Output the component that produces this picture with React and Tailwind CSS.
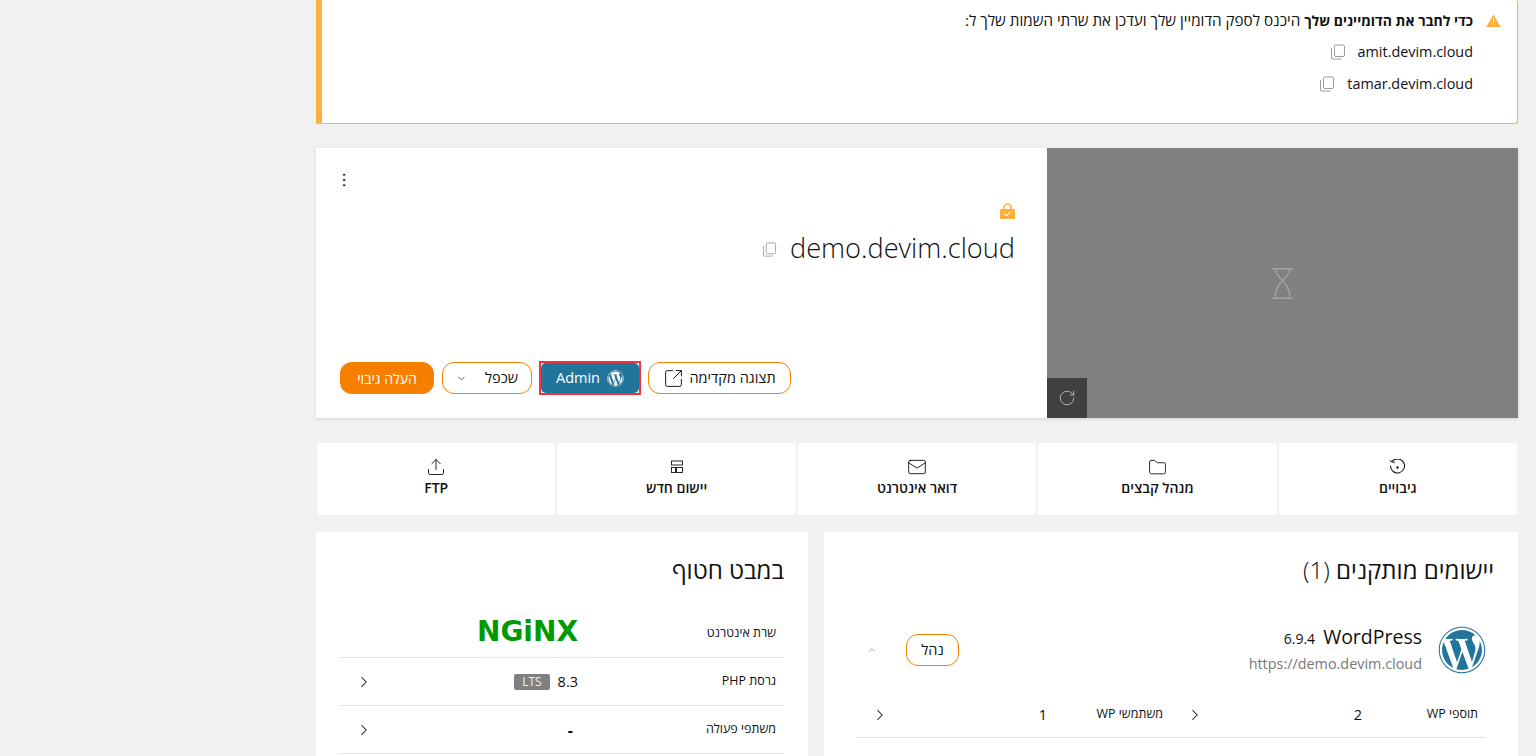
import React from "react";
import { ChevronDown, ChevronRight, ChevronUp, EllipsisVertical, Folder, Mail, RotateCw, SquareArrowOutUpRight, Upload } from "lucide-react";
import { FaWordpress } from "react-icons/fa";

const CopyIcon = ({ className }) => (
  <svg className={className} viewBox="0 0 16 16" fill="none" stroke="currentColor" strokeWidth="1">
    <rect x="4.5" y="1" width="10" height="11.5" rx="1.5" />
    <path d="M1.5 4v10a1 1 0 0 0 1 1h9" />
  </svg>
);

const BackupIcon = () => (
  <svg className="w-[17px] h-[17px]" viewBox="0 0 16 16" fill="none" stroke="currentColor" strokeWidth="1">
    <path d="M3 2.2a6.6 6.6 0 1 1-1.6 4.2" />
    <path d="M1 1.5l2 1.2v.1l2.600 .2" />
    <circle cx="8" cy="8" r=".6" fill="currentColor" />
  </svg>
);

const AppsIcon = () => (
  <svg className="w-[14px] h-[14px]" viewBox="0 0 14 14" fill="none" stroke="currentColor" strokeWidth="0.9">
    <rect x="1.500" y="1" width="11" height="4" />
    <rect x="1.500" y="7.500" width="4" height="5" />
    <rect x="6.500" y="7.500" width="6" height="5" />
  </svg>
);

const tiles = [
  { label: "גיבויים", icon: <BackupIcon /> },
  { label: "מנהל קבצים", icon: <Folder className="w-[19px] h-[19px]" strokeWidth={1.1} /> },
  { label: "דואר אינטרנט", icon: <Mail className="w-[20px] h-[20px]" strokeWidth={1.1} /> },
  { label: "יישום חדש", icon: <AppsIcon /> },
  { label: "FTP", icon: <Upload className="w-[20px] h-[20px]" strokeWidth={1.1} /> },
];

const Alert = () => (
  <div className="h-[124px] bg-white border border-t-0 border-[#f5b54c] border-l-[6px] border-l-[#fdb03c] rounded-r-[3px] pr-[44px] pt-[9px] text-[14.400px] text-[#111]">
    <div className="flex items-center h-[22px] relative">
      <svg className="absolute right-[-28px] top-[5px] w-[15px] h-[13px]" viewBox="0 0 15 13">
        <path d="M7.500 .5L14.800 13H.2z" fill="#fdb03c" />
        <rect x="7" y="4.500" width="1" height="4" fill="#fff" />
        <rect x="7" y="9.500" width="1" height="1" fill="#fff" />
      </svg>
      <span className="text-[15.200px]"><b className="text-[14px]">כדי לחבר את הדומיינים שלך</b> היכנס לספק הדומיין שלך ועדכן את שרתי השמות שלך ל:</span>
    </div>
    <div className="mt-[5px]">
      {["amit.devim.cloud", "tamar.devim.cloud"].map((d) => (
        <div key={d} className="flex items-center h-[32px] gap-[12px]">
          <span>{d}</span>
          <CopyIcon className="w-[16px] h-[16px] text-[#9a9a9a]" />
        </div>
      ))}
    </div>
  </div>
);

const Hero = () => (
  <div className="h-[270px] bg-white flex shadow-[0_1px_3px_rgba(0,0,0,0.12)]">
    <div className="w-[471px] bg-[#808080] relative flex items-center justify-center">
      <svg className="w-[21px] h-[31px] text-[#a3a3a3]" viewBox="0 0 21 31" fill="none" stroke="currentColor" strokeWidth="1.400">
        <path d="M0 .7h21M0 30.300h21M3 1c0 8 15 13 15 29M18 1C18 9 3 14 3 30" />
      </svg>
      <div className="absolute left-0 bottom-0 w-[40px] h-[40px] bg-[#404040] flex items-center justify-center">
        <RotateCw className="w-[18px] h-[18px] text-[#bdbdbd]" strokeWidth={1.2} />
      </div>
    </div>
    <div className="flex-1 px-[24px] pt-[22px] pb-[24px] flex flex-col">
      <div className="flex justify-end">
        <EllipsisVertical className="w-[18px] h-[18px] text-[#111] -ml-[5px] mt-[1px] mb-[1px]" strokeWidth={1.2} />
      </div>
      <div className="pr-[8px] mt-[13px]">
        <svg className="block w-[15px] h-[16px]" viewBox="0 0 15 16">
          <path d="M4 7V4.500a3.500 3.500 0 0 1 7 0V7" fill="none" stroke="#fdb03c" strokeWidth="1.600" />
          <rect y="6" width="15" height="10" rx="1" fill="#fdb03c" />
          <path d="M4.500 10.800l2 2 3.800-3.600" fill="none" stroke="#fff" strokeWidth="1.100" />
        </svg>
        <div className="flex items-center gap-[13px] mt-[9px]">
          <span className="text-[27.200px] leading-[40px] font-light text-[#111]" dir="ltr">demo.devim.cloud</span>
          <CopyIcon className="w-[15px] h-[15px] text-[#a0a0a0] mt-[2px]" />
        </div>
      </div>
      <div className="mt-auto flex items-center justify-end gap-[7px] h-[32px] text-[14.500px] text-[#111]">
        <button className="h-[32px] w-[143px] border border-[#f77f00] rounded-[12px] flex items-center justify-center gap-[5px]">
          תצוגה מקדימה
          <SquareArrowOutUpRight className="w-[21px] h-[21px]" strokeWidth={1.1} />
        </button>
        <div className="border-2 border-[#f5303c]">
          <button className="h-[30px] w-[98px] bg-[#21759b] text-white rounded-[5px] flex items-center justify-center gap-[7px]">
            <FaWordpress className="w-[17px] h-[17px]" />
            <span>Admin</span>
          </button>
        </div>
        <button className="h-[32px] w-[90px] border border-[#f77f00] rounded-[12px] flex items-center justify-center gap-[18px]">
          שכפל
          <ChevronDown className="w-[11px] h-[11px]" strokeWidth={1.5} />
        </button>
        <button className="h-[32px] w-[94px] bg-[#f77f00] text-white rounded-[12px] text-[14px] font-medium mr-[1px]">העלה גיבוי</button>
      </div>
    </div>
  </div>
);

const Tiles = () => (
  <div className="grid grid-cols-5 gap-[2px] px-[1px] mt-[25px]">
    {tiles.map((t) => (
      <div key={t.label} className="h-[72px] bg-white rounded-[2px] flex flex-col items-center pt-[15px] text-[#111]">
        <div className="h-[18px] flex items-center justify-center">{t.icon}</div>
        <div className="text-[14px] font-semibold leading-[18px] mt-[3px]">{t.label}</div>
      </div>
    ))}
  </div>
);

const AppsCard = () => (
  <div className="w-[694px] bg-white rounded-[2px] h-[260px] pt-[24px]">
    <h2 className="text-[24px] leading-[28px] text-[#111] pr-[24px]">
      יישומים מותקנים <span className="font-light">(1)</span>
    </h2>
    <div className="px-[32px] mt-[42px]">
      <div className="flex items-center h-[48px]">
        <FaWordpress className="w-[48px] h-[48px] text-[#21759b]" />
        <div className="mr-[16px] self-start">
          <div className="flex items-baseline gap-[8px] text-[#111]">
            <span className="text-[19.500px] leading-[22px]">WordPress</span>
            <span className="text-[14px]">6.9.4</span>
          </div>
          <div className="text-[14.400px] text-[#777] leading-[26px] mt-[2px]" dir="ltr">https://demo.devim.cloud</div>
        </div>
        <button className="mr-auto h-[32px] w-[53px] border border-[#f77f00] rounded-[12px] text-[14.500px] text-[#111]">נהל</button>
        <ChevronUp className="w-[10px] h-[10px] text-[#777] mr-[29px] ml-[11px]" strokeWidth={1.5} />
      </div>
      <div className="mt-[16px] h-[48px] pt-[2px] border-b border-[#e5e5e5] flex items-center text-[#111]">
        <div className="w-1/2 flex items-center pr-[8px] pl-[15px]">
          <span className="text-[12.500px] w-[116px] font-medium">תוספי WP</span>
          <span className="text-[14.500px]">2</span>
          <ChevronRight className="w-[18px] h-[18px] mr-auto" strokeWidth={1.4} />
        </div>
        <div className="w-1/2 flex items-center pr-[8px] pl-[15px]">
          <span className="text-[12.500px] w-[116px] font-medium">משתמשי WP</span>
          <span className="text-[14.500px]">1</span>
          <ChevronRight className="w-[18px] h-[18px] mr-auto" strokeWidth={1.4} />
        </div>
      </div>
    </div>
  </div>
);

const Row = ({ label, children, chevron }) => (
  <div className="h-[48px] border-b border-[#e5e5e5] flex items-center px-[8px] text-[#111]">
    <span className="w-[198px] shrink-0 text-[12.500px] font-medium">{label}</span>
    <div className="flex items-center gap-[8px]">{children}</div>
    {chevron && <ChevronRight className="w-[18px] h-[18px] mr-auto ml-[7px]" strokeWidth={1.4} />}
  </div>
);

const GlanceCard = () => (
  <div className="w-[492px] bg-white rounded-[2px] h-[260px] pt-[24px] px-[24px]">
    <h2 className="text-[24px] leading-[28px] text-[#111] font-medium">במבט חטוף</h2>
    <div className="mt-[26px]">
      <Row label="שרת אינטרנט">
        <span className="font-['DejaVu_Sans',sans-serif] font-bold text-[28px] leading-[30px] text-[#009900] mb-[4px]" dir="ltr">NGiNX</span>
      </Row>
      <Row label="גרסת PHP" chevron>
        <span className="text-[14.500px]">8.3</span>
        <span className="bg-[#808080] text-[#eee] text-[12px] leading-[16px] px-[8px] rounded-[2px]">LTS</span>
      </Row>
      <Row label="משתפי פעולה" chevron>
        <span className="text-[16px] font-bold mr-[5px]">-</span>
      </Row>
    </div>
  </div>
);

export default function App() {
  return (
    <div dir="rtl" className="h-[756px] overflow-hidden bg-[#f1f1f1] font-['Open_Sans',sans-serif] pr-[18px] pl-[316px]">
      <Alert />
      <div className="mt-[24px]">
        <Hero />
      </div>
      <Tiles />
      <div className="flex gap-[16px] mt-[17px]">
        <AppsCard />
        <GlanceCard />
      </div>
    </div>
  );
}
